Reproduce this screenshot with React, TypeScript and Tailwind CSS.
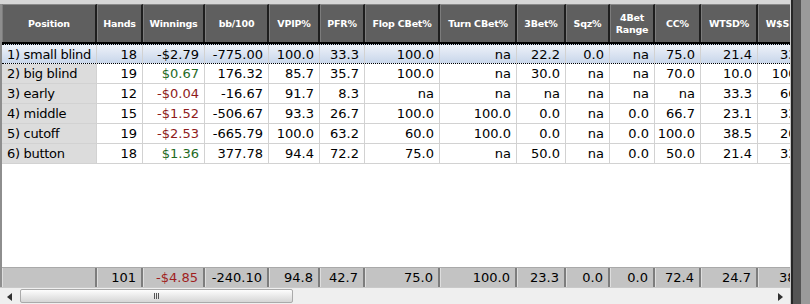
import React from "react";

type Col = { label: string; w: string; align: "left" | "right" };

const cols: Col[] = [
  { label: "Position", w: "w-[95px]", align: "left" },
  { label: "Hands", w: "w-[46px]", align: "right" },
  { label: "Winnings", w: "w-[62px]", align: "right" },
  { label: "bb/100", w: "w-[64px]", align: "right" },
  { label: "VPIP%", w: "w-[51px]", align: "right" },
  { label: "PFR%", w: "w-[45px]", align: "right" },
  { label: "Flop CBet%", w: "w-[75px]", align: "right" },
  { label: "Turn CBet%", w: "w-[77px]", align: "right" },
  { label: "3Bet%", w: "w-[49px]", align: "right" },
  { label: "Sqz%", w: "w-[44px]", align: "right" },
  { label: "4Bet Range", w: "w-[45px]", align: "right" },
  { label: "CC%", w: "w-[46px]", align: "right" },
  { label: "WTSD%", w: "w-[57px]", align: "right" },
  { label: "W$SD%", w: "w-[57px]", align: "right" },
];

const rows: string[][] = [
  ["1) small blind", "18", "-$2.79", "-775.00", "100.0", "33.3", "100.0", "na", "22.2", "0.0", "na", "75.0", "21.4", "33.3"],
  ["2) big blind", "19", "$0.67", "176.32", "85.7", "35.7", "100.0", "na", "30.0", "na", "na", "70.0", "10.0", "100.0"],
  ["3) early", "12", "-$0.04", "-16.67", "91.7", "8.3", "na", "na", "na", "na", "na", "na", "33.3", "66.7"],
  ["4) middle", "15", "-$1.52", "-506.67", "93.3", "26.7", "100.0", "100.0", "0.0", "na", "0.0", "66.7", "23.1", "33.3"],
  ["5) cutoff", "19", "-$2.53", "-665.79", "100.0", "63.2", "60.0", "100.0", "0.0", "na", "0.0", "100.0", "38.5", "20.0"],
  ["6) button", "18", "$1.36", "377.78", "94.4", "72.2", "75.0", "na", "50.0", "na", "0.0", "50.0", "21.4", "33.3"],
];

const totals = ["", "101", "-$4.85", "-240.10", "94.8", "42.7", "75.0", "100.0", "23.3", "0.0", "0.0", "72.4", "24.7", "38.5"];

function moneyColor(v: string) {
  return v.startsWith("-") ? "text-[#8e1b1b]" : "text-[#1f6a1f]";
}

export default function App() {
  return (
    <div className="flex h-[304px] w-[810px] overflow-hidden bg-[#d6d6d6] font-['DejaVu_Sans',sans-serif] text-[13px] text-black">
      <div className="flex w-[790px] min-w-0 shrink-0 flex-col overflow-hidden pt-[4px]">
        <div className="flex min-h-0 flex-1 flex-col overflow-hidden border-l-2 border-[#8e8e8e] bg-white">
          {/* header */}
          <div className="flex h-[38px] shrink-0">
            {cols.map((c) => (
              <div
                key={c.label}
                className={`${c.w} flex shrink-0 items-center justify-center border-t border-l border-r-2 border-t-[#8a8a8a] border-l-[#7c7c7c] border-r-[#1e1e1e] bg-[#5f5f5f] px-[2px] text-center text-[9.5px] leading-[12px] font-bold tracking-[-0.2px] text-white`}
              >
                {c.label === "4Bet Range" ? (
                  <span>
                    4Bet
                    <br />
                    Range
                  </span>
                ) : (
                  <span className="whitespace-nowrap">{c.label}</span>
                )}
              </div>
            ))}
          </div>
          <div className="h-[2px] shrink-0 bg-black" />

          {/* rows */}
          {rows.map((r, ri) => {
            const selected = ri === 0;
            return (
              <div
                key={r[0]}
                className={`flex h-[20px] shrink-0 ${
                  selected
                    ? "border-y border-dotted border-black bg-gradient-to-b from-[#eef2f9] to-[#c8d6ea]"
                    : "border-b border-[#d2d2d2]"
                }`}
              >
                {r.map((v, ci) => {
                  const col = cols[ci];
                  const bg = selected ? "" : ci === 0 ? "bg-[#dcdcdc]" : "bg-white";
                  const color = ci === 2 && !selected ? moneyColor(v) : "";
                  return (
                    <div
                      key={ci}
                      className={`${col.w} ${bg} ${color} flex shrink-0 items-center whitespace-nowrap border-r border-[#d2d2d2] leading-none ${
                        col.align === "left" ? "justify-start pl-[5px] tracking-[-0.3px]" : "justify-end pr-[5px]"
                      }`}
                    >
                      {v}
                    </div>
                  );
                })}
              </div>
            );
          })}

          <div className="flex-1 bg-white" />

          {/* totals */}
          <div className="flex h-[20px] shrink-0 border-t border-[#a9a9a9] bg-[#c3c3c3]">
            {totals.map((v, ci) => (
              <div
                key={ci}
                className={`${cols[ci].w} ${
                  ci === 2 ? "text-[#a01e1e]" : ""
                } flex shrink-0 items-center justify-end whitespace-nowrap border-r-2 border-l border-r-[#7d7d7d] border-l-[#dedede] pr-[5px] leading-none`}
              >
                {v}
              </div>
            ))}
          </div>
        </div>

        {/* horizontal scrollbar */}
        <div className="relative h-[17px] shrink-0 border-t border-[#c9c9c9] bg-[#efefef]">
          <svg className="absolute left-[7px] top-[5px]" width="5" height="8" viewBox="0 0 5 8">
            <path d="M5 0 L0 4 L5 8 Z" fill="#303030" />
          </svg>
          <div className="absolute left-[20px] top-[1px] flex h-[14px] w-[273px] items-center justify-center rounded-[2px] border border-[#aaaaaa] bg-gradient-to-b from-[#fdfdfd] to-[#d6d6d6]">
            <div className="flex gap-[1px]">
              <div className="h-[6px] w-[1px] bg-[#555]" />
              <div className="h-[6px] w-[1px] bg-[#555]" />
              <div className="h-[6px] w-[1px] bg-[#555]" />
            </div>
          </div>
          <svg className="absolute left-[778px] top-[5px]" width="5" height="8" viewBox="0 0 5 8">
            <path d="M0 0 L5 4 L0 8 Z" fill="#303030" />
          </svg>
        </div>
      </div>

      {/* right edge */}
      <div className="w-[1px] shrink-0 bg-[#c8c8c8]" />
      <div className="w-[2px] shrink-0 bg-[#262626]" />
      <div className="w-[8px] shrink-0 bg-[#545454]" />
      <div className="w-[9px] shrink-0 bg-[#9a9a9a]" />
    </div>
  );
}
